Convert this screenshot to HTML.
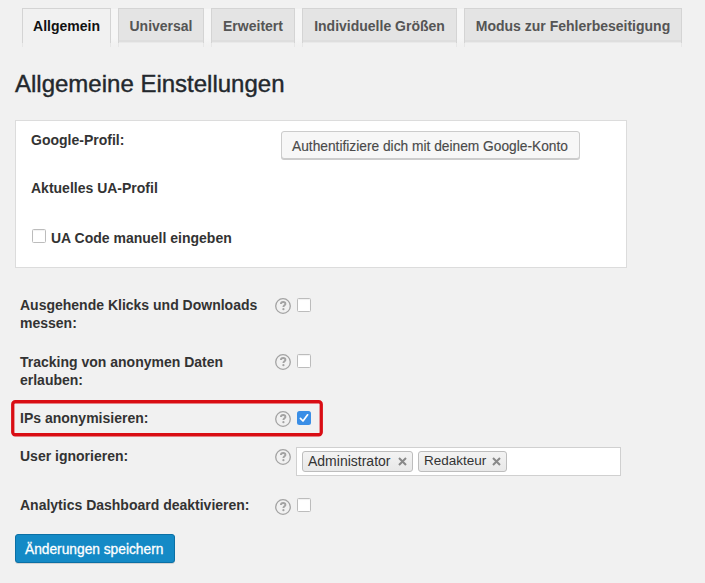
<!DOCTYPE html>
<html><head><meta charset="utf-8">
<style>
*{box-sizing:border-box;margin:0;padding:0}
html,body{width:705px;height:583px;overflow:hidden;background:#f1f1f1;font-family:"Liberation Sans",sans-serif;color:#444}
.abs,.q{position:absolute}
.gap{position:absolute;top:9px;height:36px;background:linear-gradient(#f6f6f6 80%,#f1f1f1)}
.tab{position:absolute;top:8px;height:35px;border:1px solid #d4d4d4;border-bottom:none;background:linear-gradient(#e4e4e4 0,#e4e4e4 31px,#dedede 31px,#dedede 33px,#e9e9e9 33px);color:#555;font-weight:bold;font-size:14px;line-height:16px;text-align:center;padding-top:9px;white-space:nowrap}
.tab:after{content:'';position:absolute;left:-1px;right:-1px;top:34px;height:4px;border-left:1px solid #e6e6e6;border-right:1px solid #e6e6e6}
.tab.act{background:#f1f1f1;color:#111}
h2{position:absolute;left:15px;top:70px;font-size:24px;line-height:28px;font-weight:normal;color:#23282d;white-space:nowrap;-webkit-text-stroke:0.4px #23282d}
.box{position:absolute;left:15px;top:120px;width:612px;height:148px;background:#fff;border:1px solid #dcdcdc}
.lbl,.btxt,.ttxt,.stxt{position:absolute;font-size:14px;line-height:16px;white-space:nowrap}
.lbl{font-weight:bold;color:#333}
.btxt{color:#4a4a4a;font-size:13.75px;-webkit-text-stroke:0.15px #4a4a4a}
.ttxt{color:#333}
.stxt{color:#fff;font-size:13.75px;-webkit-text-stroke:0.3px #fff}
.btn{position:absolute;left:281px;top:131px;width:299px;height:28px;border:1px solid #ccc;border-radius:3px;background:#f7f7f7;box-shadow:0 1px 0 #ccc}
.cb{position:absolute;width:14px;height:14px;border:1px solid #bcbcbc;border-radius:1.5px;background:#fff;box-shadow:inset 0 1px 1px rgba(0,0,0,.06)}
.inp{position:absolute;left:296px;top:447px;width:325px;height:29px;background:#fff;border:1px solid #d0d0d0}
.tag{position:absolute;top:451px;height:21px;border:1px solid #bdbdbd;border-radius:3px;background:linear-gradient(#f3f3f3,#e8e8e8)}
.save{position:absolute;left:15px;top:534px;width:160px;height:29px;background:#148ac6;border:1px solid #0b70a5;border-radius:3px;box-shadow:0 1px 0 rgba(0,0,0,.12)}
</style></head><body>
<div class="tab act" style="left:22px;width:89px"><span>Allgemein</span></div>
<div class="tab" style="left:118px;width:86px"><span>Universal</span></div>
<div class="tab" style="left:211px;width:84px"><span>Erweitert</span></div>
<div class="tab" style="left:302px;width:155px"><span>Individuelle Größen</span></div>
<div class="tab" style="left:464px;width:218px"><span>Modus zur Fehlerbeseitigung</span></div>
<div class="gap" style="left:111px;width:7px"></div>
<div class="gap" style="left:204px;width:7px"></div>
<div class="gap" style="left:295px;width:7px"></div>
<div class="gap" style="left:457px;width:7px"></div>
<h2>Allgemeine Einstellungen</h2>
<div class="box"></div>
<div class="lbl" style="left:31px;top:132px;">Google-Profil:</div>
<div class="btn"></div>
<div class="btxt" style="left:292px;top:138.5px;">Authentifiziere dich mit deinem Google-Konto</div>
<div class="lbl" style="left:31px;top:180px;">Aktuelles UA-Profil</div>
<div class="cb" style="left:32px;top:229px"></div>
<div class="lbl" style="left:51px;top:230px;">UA Code manuell eingeben</div>
<div class="lbl" style="left:20px;top:297px;">Ausgehende Klicks und Downloads</div>
<div class="lbl" style="left:20px;top:315px;">messen:</div>
<svg class="q" style="left:275px;top:298px" width="16" height="16" viewBox="0 0 16 16"><circle cx="8" cy="8" r="7.3" fill="none" stroke="#a3a3a3" stroke-width="1.3"/><path d="M5.9 6.1 C5.9 4.7 6.9 4 8.2 4 C9.5 4 10.4 4.7 10.4 5.9 C10.4 7.2 8.4 7.4 8.4 8.9 L8.4 9.1" fill="none" stroke="#a3a3a3" stroke-width="1.9"/><circle cx="8.4" cy="11.2" r="1.1" fill="#a3a3a3"/></svg>
<div class="cb" style="left:297px;top:298px"></div>
<div class="lbl" style="left:20px;top:354px;">Tracking von anonymen Daten</div>
<div class="lbl" style="left:20px;top:372px;">erlauben:</div>
<svg class="q" style="left:275px;top:354px" width="16" height="16" viewBox="0 0 16 16"><circle cx="8" cy="8" r="7.3" fill="none" stroke="#a3a3a3" stroke-width="1.3"/><path d="M5.9 6.1 C5.9 4.7 6.9 4 8.2 4 C9.5 4 10.4 4.7 10.4 5.9 C10.4 7.2 8.4 7.4 8.4 8.9 L8.4 9.1" fill="none" stroke="#a3a3a3" stroke-width="1.9"/><circle cx="8.4" cy="11.2" r="1.1" fill="#a3a3a3"/></svg>
<div class="cb" style="left:297px;top:354px"></div>
<svg class="abs" style="left:0;top:390px" width="340" height="56"><rect x="12.75" y="11.75" width="308.5" height="33" rx="2.5" fill="none" stroke="#d90d14" stroke-width="3.3"/></svg>
<div class="lbl" style="left:20px;top:410px;">IPs anonymisieren:</div>
<svg class="q" style="left:275px;top:411px" width="16" height="16" viewBox="0 0 16 16"><circle cx="8" cy="8" r="7.3" fill="none" stroke="#a3a3a3" stroke-width="1.3"/><path d="M5.9 6.1 C5.9 4.7 6.9 4 8.2 4 C9.5 4 10.4 4.7 10.4 5.9 C10.4 7.2 8.4 7.4 8.4 8.9 L8.4 9.1" fill="none" stroke="#a3a3a3" stroke-width="1.9"/><circle cx="8.4" cy="11.2" r="1.1" fill="#a3a3a3"/></svg>
<svg class="abs" style="left:297px;top:411px" width="14" height="14" viewBox="0 0 14 14"><rect x="0" y="0" width="14" height="14" rx="2.5" fill="#3a8ee6"/><path d="M3.4 7.4 L6 10 L10.6 3.8" fill="none" stroke="#fff" stroke-width="1.7" stroke-linecap="round" stroke-linejoin="round"/></svg>
<div class="lbl" style="left:20px;top:448px;">User ignorieren:</div>
<svg class="q" style="left:275px;top:449px" width="16" height="16" viewBox="0 0 16 16"><circle cx="8" cy="8" r="7.3" fill="none" stroke="#a3a3a3" stroke-width="1.3"/><path d="M5.9 6.1 C5.9 4.7 6.9 4 8.2 4 C9.5 4 10.4 4.7 10.4 5.9 C10.4 7.2 8.4 7.4 8.4 8.9 L8.4 9.1" fill="none" stroke="#a3a3a3" stroke-width="1.9"/><circle cx="8.4" cy="11.2" r="1.1" fill="#a3a3a3"/></svg>
<div class="inp"></div>
<div class="tag" style="left:302px;width:111px"></div>
<div class="ttxt" style="left:308px;top:453px;">Administrator</div>
<svg class="abs" style="left:398px;top:457px" width="9" height="9" viewBox="0 0 9 9"><path d="M1 1 L8 8 M8 1 L1 8" stroke="#888" stroke-width="2"/></svg>
<div class="tag" style="left:418px;width:89px"></div>
<div class="ttxt" style="left:424px;top:453px;font-size:13.5px">Redakteur</div>
<svg class="abs" style="left:492px;top:457px" width="9" height="9" viewBox="0 0 9 9"><path d="M1 1 L8 8 M8 1 L1 8" stroke="#888" stroke-width="2"/></svg>
<div class="lbl" style="left:20px;top:497px;">Analytics Dashboard deaktivieren:</div>
<svg class="q" style="left:275px;top:499px" width="16" height="16" viewBox="0 0 16 16"><circle cx="8" cy="8" r="7.3" fill="none" stroke="#a3a3a3" stroke-width="1.3"/><path d="M5.9 6.1 C5.9 4.7 6.9 4 8.2 4 C9.5 4 10.4 4.7 10.4 5.9 C10.4 7.2 8.4 7.4 8.4 8.9 L8.4 9.1" fill="none" stroke="#a3a3a3" stroke-width="1.9"/><circle cx="8.4" cy="11.2" r="1.1" fill="#a3a3a3"/></svg>
<div class="cb" style="left:297px;top:498px"></div>
<div class="save"></div>
<div class="stxt" style="left:25px;top:542px;">Änderungen speichern</div>
</body></html>
